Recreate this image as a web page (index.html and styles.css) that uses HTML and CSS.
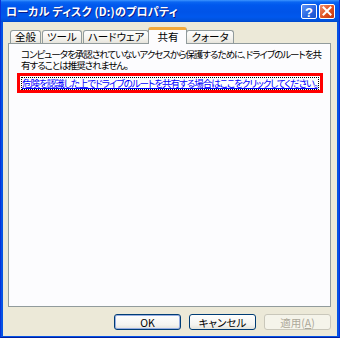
FILE: index.html
```html
<!DOCTYPE html>
<html lang="ja">
<head>
<meta charset="utf-8">
<link rel="stylesheet" href="styles.css">
</head>
<body>
<div class="window">
  <div class="titlebar">
    <span class="title">ローカル ディスク (D:)のプロパティ</span>
    <div class="caption-buttons">
      <span class="cap-btn help">
        <svg width="16" height="15" viewBox="0 0 16 15"><text x="8" y="12.5" text-anchor="middle" font-family="Liberation Sans, sans-serif" font-weight="bold" font-size="13" fill="#fff">?</text></svg>
      </span>
      <span class="cap-btn close">
        <svg width="16" height="15" viewBox="0 0 16 15"><path d="M4.5 3.5 L11.5 10.5 M11.5 3.5 L4.5 10.5" stroke="#fff" stroke-width="2" stroke-linecap="square"/></svg>
      </span>
    </div>
  </div>
  <div class="client">
    <div class="tabs">
      <span class="tab">全般</span>
      <span class="tab">ツール</span>
      <span class="tab">ハードウェア</span>
      <span class="tab active">共有</span>
      <span class="tab">クォータ</span>
    </div>
    <div class="panel">
      <p class="desc">コンピュータを承認されていないアクセスから保護するために、ドライブのルートを共<br>有することは推奨されません。</p>
      <div class="highlight">
        <a class="link" href="#">危険を認識した上でドライブのルートを共有する場合はここをクリックしてください。</a>
      </div>
    </div>
    <div class="buttons">
      <button class="btn default">OK</button>
      <button class="btn">キャンセル</button>
      <button class="btn disabled">適用(<u>A</u>)</button>
    </div>
  </div>
</div>
</body>
</html>
```
FILE: styles.css
```css
html, body {
  margin: 0;
  padding: 0;
}
body {
  width: 340px;
  height: 338px;
  overflow: hidden;
  font-family: "Noto Sans CJK JP", "Noto Sans", sans-serif;
  font-feature-settings: "palt";
}
.window {
  width: 340px;
  height: 338px;
  box-sizing: border-box;
  background: #0553e4;
  border-left: 1px solid #0831d9;
  border-right: 1px solid #0831d9;
  border-bottom: 1px solid #001ea0;
  display: flex;
  flex-direction: column;
}
.titlebar {
  height: 22px;
  flex: none;
  display: flex;
  align-items: center;
  justify-content: space-between;
  padding: 0 4px 0 5px;
  background: linear-gradient(#3d95ff 0, #0a66f2 2px, #0058ee 5px, #0054e8 12px, #0058ee 17px, #0050d8 21px, #0046c8 22px);
}
.title {
  color: #fff;
  font-weight: bold;
  font-size: 11px;
  letter-spacing: 0.2px;
  text-shadow: 1px 1px 0 #0a1e8c;
  line-height: 22px;
}
.caption-buttons {
  display: flex;
  gap: 2px;
  margin-top: 1px;
}
.cap-btn {
  width: 16px;
  height: 15px;
  box-sizing: border-box;
  border: 1px solid #fff;
  border-radius: 2px;
  display: flex;
}
.cap-btn svg {
  margin: -1px;
}
.help {
  background: linear-gradient(135deg, #5f95f7, #2663e0 60%, #1a50c8);
}
.close {
  background: linear-gradient(135deg, #f09070, #e0501e 55%, #c03510);
}
.client {
  flex: 1;
  margin: 0 2px 2px 2px;
  background: #ece9d8;
  display: flex;
  flex-direction: column;
  padding: 5px 6px 6px 5px;
}
.tabs {
  display: flex;
  align-items: flex-end;
  padding-left: 2px;
  height: 16px;
  position: relative;
  z-index: 1;
}
.tab {
  height: 13px;
  box-sizing: border-box;
  border: 1px solid #919b9c;
  border-bottom: none;
  border-radius: 3px 3px 0 0;
  background: linear-gradient(#fefefe, #f4f3ee 60%, #e6e4dc);
  font-size: 10.5px;
  line-height: 12px;
  color: #000;
  padding: 0 4px;
  margin-right: 1px;
  min-width: 31px;
  text-align: center;
}
.tab.active {
  height: 17px;
  margin-bottom: -1px;
  background: #fcfcfe;
  border-top: 3px solid #f2a93b;
  line-height: 13px;
  padding: 0 8px;
  margin-left: -2px;
  margin-right: -1px;
  min-width: 36px;
}
.panel {
  height: 264px;
  box-sizing: border-box;
  background: #fcfcfe;
  border: 1px solid #919b9c;
  padding: 5px 7px 0 8px;
}
.desc {
  margin: 0 0 0 4px;
  font-size: 9.5px;
  line-height: 11px;
  color: #000;
  letter-spacing: -1px;
  white-space: nowrap;
}
.highlight {
  margin-top: 2px;
  border: 3px solid #ff0000;
  height: 20px;
  box-sizing: border-box;
  display: flex;
  align-items: center;
  padding: 0 2px;
  overflow: hidden;
}
.link {
  font-size: 9.5px;
  line-height: 11px;
  color: #0000ff;
  letter-spacing: -1px;
  white-space: nowrap;
  outline: 1px dotted #000;
  outline-offset: 0;
}
.buttons {
  margin-top: 7px;
  display: flex;
  justify-content: flex-end;
  gap: 8px;
}
.btn {
  width: 67px;
  height: 16px;
  box-sizing: border-box;
  border: 1px solid #003c74;
  border-radius: 3px;
  background: linear-gradient(#fefefe, #f4f4f0 70%, #e3e2da);
  font-family: "Noto Sans CJK JP", sans-serif;
  font-feature-settings: "palt";
  font-size: 10.5px;
  line-height: 13px;
  padding: 0;
  color: #000;
}
.btn.default {
  box-shadow: inset 0 0 0 1px #97aee2;
}
.btn.disabled {
  border-color: #c9c7ba;
  background: #f5f4ea;
  color: #aca899;
}
.btn u {
  text-decoration: underline;
}
```
